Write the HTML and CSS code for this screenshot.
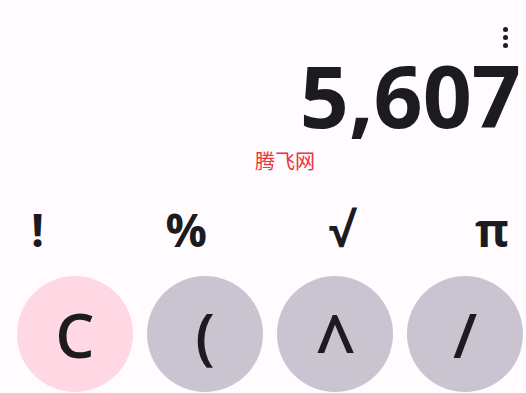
FILE: index.html
```html
<!DOCTYPE html>
<html>
<head>
<meta charset="utf-8">
<link rel="stylesheet" href="styles.css">
</head>
<body>
<div class="app">
  <div class="toolbar">
    <div class="menu"><span class="dot"></span><span class="dot"></span><span class="dot"></span></div>
  </div>
  <div class="display">5,607</div>
  <div class="brand">腾飞网</div>
  <div class="funcs">
    <span class="fn">!</span>
    <span class="fn">%</span>
    <span class="fn">√</span>
    <span class="fn">π</span>
  </div>
  <div class="keys">
    <div class="key key-clear">C</div>
    <div class="key">(</div>
    <div class="key"><span class="caret">^</span></div>
    <div class="key">/</div>
  </div>
</div>
</body>
</html>
```

FILE: styles.css
```css
html, body {
  margin: 0;
  padding: 0;
  background: #fffbfe;
  overflow: hidden;
}
.app {
  width: 526px;
  height: 393px;
  overflow: hidden;
  display: flex;
  flex-direction: column;
  font-family: "Open Sans", "Noto Sans", sans-serif;
  color: #1c1b1f;
}
.toolbar {
  height: 27px;
  display: flex;
  justify-content: flex-end;
  align-items: flex-end;
  padding-right: 18px;
}
.menu {
  display: flex;
  flex-direction: column;
  gap: 3px;
  align-items: center;
  height: 0;
}
.dot {
  width: 5px;
  height: 5px;
  border-radius: 50%;
  background: #1c1b1f;
  flex: none;
}
.display {
  text-align: right;
  font-size: 86px;
  font-weight: 700;
  line-height: 110px;
  padding-right: 5px;
  margin-top: 13px;
}
.brand {
  padding-left: 255px;
  margin-top: -3px;
  font-family: "Noto Sans CJK SC", sans-serif;
  font-size: 20px;
  line-height: 28px;
  color: #f0323c;
}
.funcs {
  display: flex;
  justify-content: space-between;
  padding: 31px 17px 0 31px;
  font-size: 46px;
  font-weight: 700;
  line-height: 46px;
}
.keys {
  display: flex;
  gap: 14px;
  padding: 24px 0 0 17px;
}
.key {
  width: 116px;
  height: 116px;
  flex: none;
  border-radius: 50%;
  background: #cac4d0;
  display: flex;
  align-items: center;
  justify-content: center;
  font-size: 62px;
  font-weight: 600;
  line-height: 1;
}
.key-clear {
  background: #ffd8e4;
}
.caret {
  display: inline-block;
  font-weight: 600;
  transform: translate(1px, 9px) scale(1.15, 1.35);
}
```
